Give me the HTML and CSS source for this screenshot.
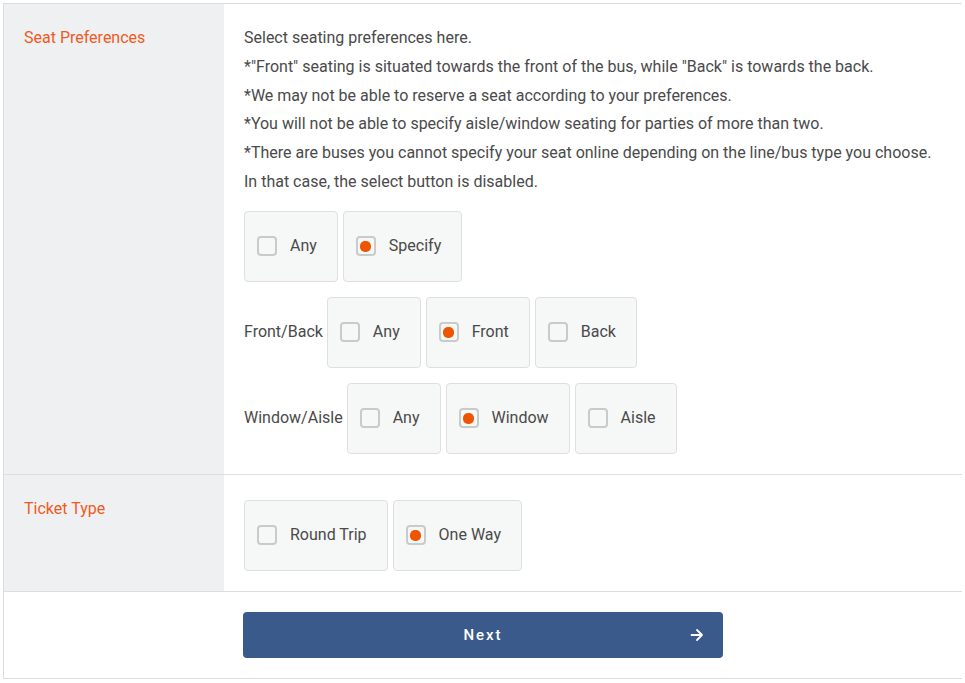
FILE: index.html
```html
<!DOCTYPE html>
<html lang="en">
<head>
<meta charset="utf-8">
<title>Seat Preferences</title>
<link rel="stylesheet" href="styles.css">
</head>
<body>
<div class="form">
  <div class="row">
    <div class="label">Seat Preferences</div>
    <div class="content">
      <div class="notes">
        <p>Select seating preferences here.</p>
        <p>*"Front" seating is situated towards the front of the bus, while "Back" is towards the back.</p>
        <p>*We may not be able to reserve a seat according to your preferences.</p>
        <p>*You will not be able to specify aisle/window seating for parties of more than two.</p>
        <p>*There are buses you cannot specify your seat online depending on the line/bus type you choose.</p>
        <p>In that case, the select button is disabled.</p>
      </div>
      <div class="group first">
        <label class="opt"><span class="box"></span><span>Any</span></label>
        <label class="opt"><span class="box on"></span><span>Specify</span></label>
      </div>
      <div class="group">
        <span class="glabel">Front/Back</span>
        <label class="opt"><span class="box"></span><span>Any</span></label>
        <label class="opt"><span class="box on"></span><span>Front</span></label>
        <label class="opt"><span class="box"></span><span>Back</span></label>
      </div>
      <div class="group">
        <span class="glabel">Window/Aisle</span>
        <label class="opt"><span class="box"></span><span>Any</span></label>
        <label class="opt"><span class="box on"></span><span>Window</span></label>
        <label class="opt"><span class="box"></span><span>Aisle</span></label>
      </div>
    </div>
  </div>
  <div class="row">
    <div class="label">Ticket Type</div>
    <div class="content ticket">
      <div class="group">
        <label class="opt"><span class="box"></span><span>Round Trip</span></label>
        <label class="opt"><span class="box on"></span><span>One Way</span></label>
      </div>
    </div>
  </div>
  <div class="footer">
    <button class="next" type="button">
      <span>Next</span>
      <svg class="arrow" width="14" height="14" viewBox="0 0 14 14"><path d="M1.5 7h10.5M7 2l5 5-5 5" fill="none" stroke="#fff" stroke-width="1.8" stroke-linecap="round" stroke-linejoin="round"/></svg>
    </button>
  </div>
</div>
</body>
</html>
```
FILE: styles.css
```css
* { box-sizing: border-box; }
body {
  margin: 3px;
  font-family: Roboto, "Liberation Sans", sans-serif;
  font-size: 16px;
  line-height: 1.8;
  color: #4a4a4a;
  background: #fff;
}
.form {
  width: 960px;
  border: 1px solid #dcdcdc;
}
.row {
  display: grid;
  grid-template-columns: 220px 1fr;
  border-bottom: 1px solid #dedede;
}
.label {
  background: #eff0f2;
  color: #f05a22;
  padding: 20px 20px;
}
.content {
  padding: 20px 20px 20px;
}
.notes p {
  margin: 0;
}
.group {
  display: flex;
  align-items: center;
  gap: 5px;
  margin-top: 15px;
}
.group.first { margin-top: 14px; }
.content.ticket { padding-top: 25px; }
.content.ticket .group { margin-top: 0; }
.glabel {
  margin-right: -1px;
}
.opt {
  display: flex;
  align-items: center;
  gap: 13px;
  height: 71px;
  padding: 0 20px 0 12px;
  background: #f6f7f7;
  border: 1px solid #dfdfdf;
  border-radius: 4px;
}
.box {
  width: 20px;
  height: 20px;
  border: 2px solid #cacaca;
  border-radius: 4px;
  display: flex;
  align-items: center;
  justify-content: center;
}
.box.on::after {
  content: "";
  width: 11px;
  height: 11px;
  border-radius: 5px;
  background: #ee5500;
}
.footer {
  display: flex;
  justify-content: center;
  padding: 20px 0 20px;
}
.next {
  position: relative;
  width: 480px;
  height: 46px;
  background: #3a5a8c;
  border: none;
  border-radius: 4px;
  color: #fff;
  font-family: Roboto, "Liberation Sans", sans-serif;
  font-size: 15px;
  font-weight: 500;
  letter-spacing: 2px;
  display: flex;
  align-items: center;
  justify-content: center;
}
.arrow {
  position: absolute;
  right: 19px;
  top: 16px;
}
```
